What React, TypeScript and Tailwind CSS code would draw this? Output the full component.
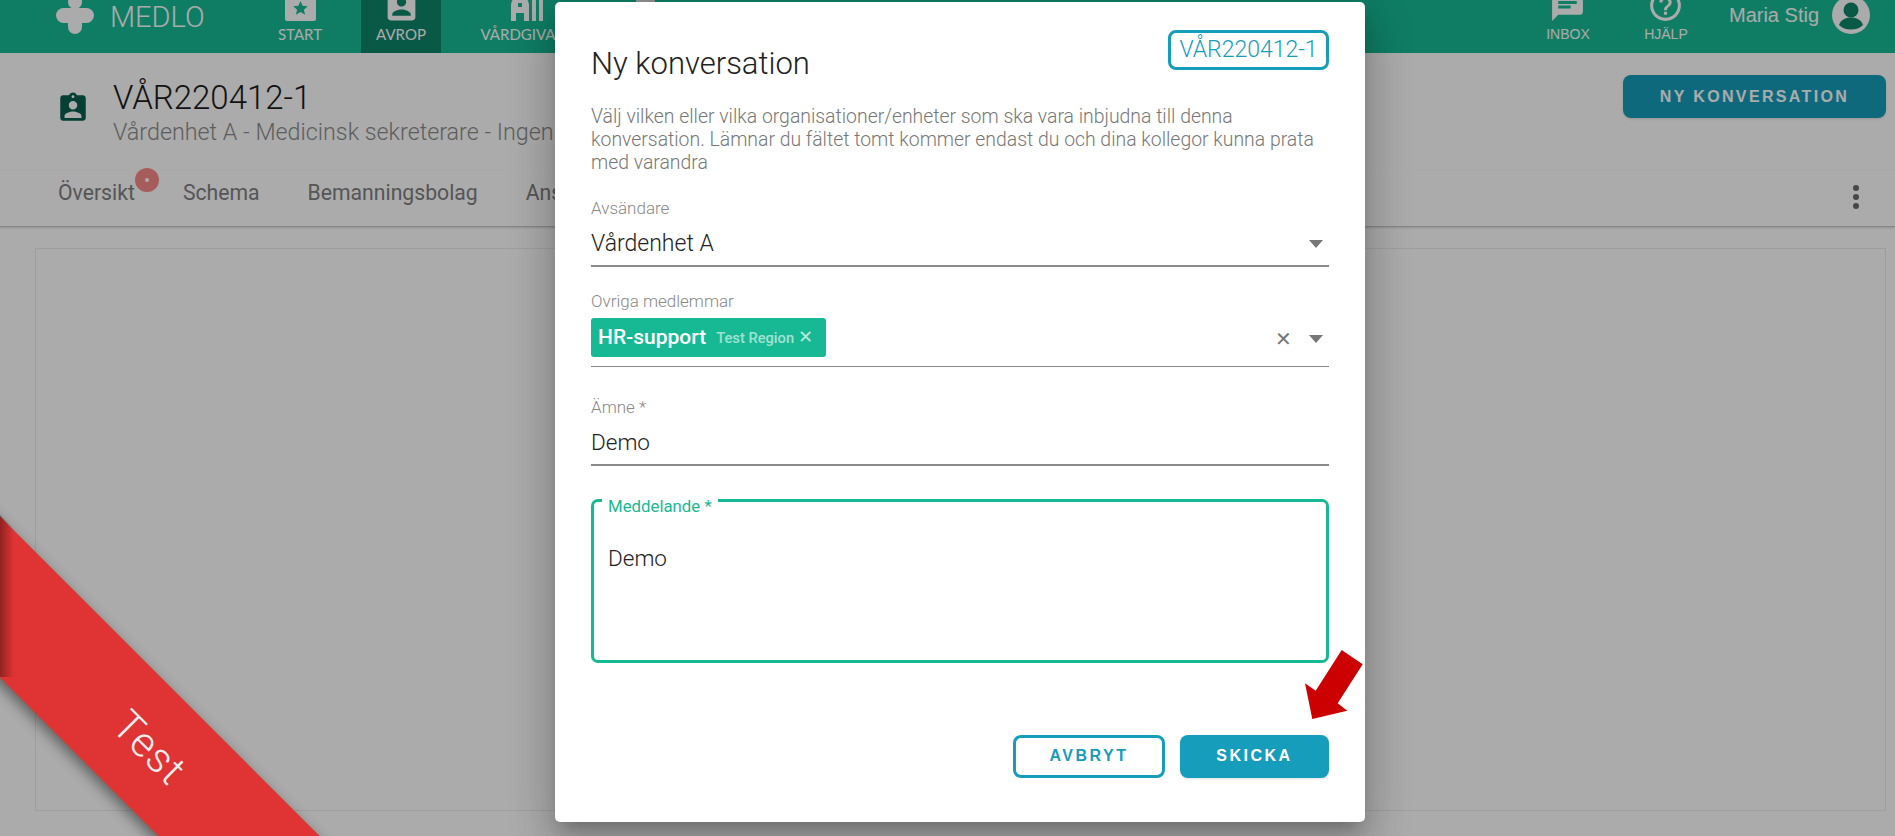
import type { ReactNode } from "react";

const ICON_BOX =
	"M3 5v14c0 1.1.89 2 2 2h14c1.1 0 2-.9 2-2V5c0-1.1-.9-2-2-2H5c-1.11 0-2 .9-2 2zm12 4c0 1.66-1.34 3-3 3s-3-1.34-3-3 1.34-3 3-3 3 1.34 3 3zm-9 8c0-2 4-3.1 6-3.1s6 1.1 6 3.1v1H6v-1z";
const ICON_CHAT =
	"M20 2H4c-1.1 0-1.99.9-1.99 2L2 22l4-4h14c1.1 0 2-.9 2-2V4c0-1.1-.9-2-2-2zM6 9h12v2H6V9zm8 5H6v-2h8v2zm4-6H6V6h12v2z";
const ICON_HELP =
	"M11 18h2v-2h-2v2zm1-16C6.48 2 2 6.48 2 12s4.48 10 10 10 10-4.48 10-10S17.52 2 12 2zm0 18c-4.41 0-8-3.59-8-8s3.59-8 8-8 8 3.59 8 8-3.59 8-8 8zm0-14c-2.21 0-4 1.79-4 4h2c0-1.1.9-2 2-2s2 .9 2 2c0 2-3 1.75-3 5h2c0-2.25 3-2.5 3-5 0-2.21-1.79-4-4-4z";
const ICON_BADGE =
	"M19 3h-4.18C14.4 1.84 13.3 1 12 1c-1.3 0-2.4.84-2.82 2H5c-1.1 0-2 .9-2 2v14c0 1.1.9 2 2 2h14c1.1 0 2-.9 2-2V5c0-1.1-.9-2-2-2zm-7 0c.55 0 1 .45 1 1s-.45 1-1 1-1-.45-1-1 .45-1 1-1zm0 4c1.66 0 3 1.34 3 3s-1.34 3-3 3-3-1.34-3-3 1.34-3 3-3zm6 12H6v-1.4c0-2 4-3.1 6-3.1s6 1.1 6 3.1V19z";

function MaterialIcon({ d, className }: { d: string; className: string }) {
	return (
		<svg viewBox="0 0 24 24" fill="currentColor" className={`shrink-0 ${className}`}>
			<path d={d} />
		</svg>
	);
}

function NavItem({
	label,
	icon,
	active,
	className,
}: {
	label: string;
	icon: ReactNode;
	active?: boolean;
	className: string;
}) {
	return (
		<div
			className={`flex h-[53px] flex-col items-center justify-end pb-[11px] text-white ${active ? "bg-[#0e856b]" : ""} ${className}`}
		>
			{icon}
			<span className="mt-[5px] shrink-0 whitespace-nowrap leading-[16px]">{label}</span>
		</div>
	);
}

function Arrow() {
	return <span className="h-0 w-0 border-x-[7.5px] border-t-[8px] border-x-transparent border-t-[#777]" />;
}

function FieldLabel({ children }: { children: ReactNode }) {
	return (
		<div className="h-5 text-[17px] font-light leading-5 text-[#888]">
			{children}
		</div>
	);
}

export default function App() {
	return (
		<div className="relative h-[836px] w-full overflow-hidden bg-white font-[Roboto,sans-serif]">
			{/* Header, scrolled a little so the icons are cut off at the top */}
			<header className="flex h-[53px] items-end overflow-hidden bg-[#17bb95]">
				<div className="relative ml-[56px] h-[53px] w-[38px] shrink-0 text-white">
					<span className="absolute left-[12px] top-[-5px] h-[14px] w-[14px] rounded-full bg-white" />
					<span className="absolute left-0 top-[8px] h-[15px] w-[38px] rounded-full bg-white" />
					<span className="absolute left-[12px] top-[10px] h-[24px] w-[14px] rounded-full bg-white" />
				</div>
				<span className="ml-[16px] w-[150px] pb-[19px] text-[29px] font-light leading-[34px] text-white">
					MEDLO
				</span>
				<NavItem
					label="START"
					className="w-[80px] font-[Lato,sans-serif] text-[15px]"
					icon={
						<svg viewBox="0 0 31 24" className="h-[24px] w-[31px] shrink-0">
							<rect width="31" height="24" rx="2" fill="#fff" />
							<path
								d="M15.5 4l2.1 4.8 5.2.5-3.9 3.4 1.2 5.1-4.6-2.7-4.6 2.7 1.2-5.1-3.9-3.4 5.2-.5z"
								fill="#17bb95"
							/>
						</svg>
					}
				/>
				<NavItem
					label="AVROP"
					active
					className="ml-[21px] w-[80px] font-[Lato,sans-serif] text-[15px]"
					icon={<MaterialIcon d={ICON_BOX} className="-mb-[4px] h-[37px] w-[37px]" />}
				/>
				<NavItem
					label="VÅRDGIVARE"
					className="ml-[31px] w-[110px] font-[Lato,sans-serif] text-[15px]"
					icon={
						<svg viewBox="0 0 32 24" fill="#fff" className="h-[24px] w-[32px] shrink-0">
							<path d="M0 24V8a9 9 0 0 1 18 0v16h-5v-8H5v8zM7 6h4v4H7zM21 0h4v24h-4zM28 0h4v24h-4z" fillRule="evenodd" />
						</svg>
					}
				/>
				<div className="ml-[54px] h-[53px] w-[19px] self-start bg-[#dcdcdc]" />

				<div className="ml-auto flex items-end">
					<NavItem
						label="INBOX"
						className="w-[70px] font-['Liberation_Sans',sans-serif] text-[14px]"
						icon={<MaterialIcon d={ICON_CHAT} className="-mb-[3px] h-[37px] w-[37px]" />}
					/>
					<NavItem
						label="HJÄLP"
						className="ml-[28px] w-[70px] font-['Liberation_Sans',sans-serif] text-[14px]"
						icon={<MaterialIcon d={ICON_HELP} className="-mb-[3px] h-[37px] w-[37px]" />}
					/>
					<div className="ml-[28px] flex h-[53px] items-start font-['Liberation_Sans',sans-serif]">
						<span className="whitespace-nowrap pt-[3px] text-[20px] leading-[24px] text-white">
							Maria Stig
						</span>
						<svg viewBox="0 0 38 38" className="ml-[13px] mr-[25px] mt-[-4px] h-[38px] w-[38px]">
							<circle cx="19" cy="19" r="19" fill="#fff" />
							<circle cx="19" cy="14" r="7.5" fill="#0e856b" />
							<path d="M7 29c2-6 8-7.5 12-7.5s10 1.5 12 7.5c-3 3-7 4.5-12 4.5S10 32 7 29z" fill="#0e856b" />
						</svg>
					</div>
				</div>
			</header>

			{/* Order title */}
			<div className="flex h-[117px] items-start justify-between pr-[9px]">
				<div className="flex items-start pt-[28px]">
					<MaterialIcon d={ICON_BADGE} className="ml-[56px] mt-[10px] h-[34px] w-[34px] text-[#095f4c]" />
					<div className="ml-[23px]">
						<div className="whitespace-nowrap text-[33px] font-light leading-[34px] text-[#1c1c1c]">
							VÅR220412-1
						</div>
						<div className="mt-[5px] whitespace-nowrap text-[23.3px] font-light leading-[24px] text-[#8d8d8d]">
							Vårdenhet A - Medicinsk sekreterare - Ingen
						</div>
					</div>
				</div>
				<button
					type="button"
					className="mt-[22px] h-[43px] w-[263px] rounded-[8px] bg-[#169dbb] font-['Liberation_Sans',sans-serif] text-[16px] font-bold tracking-[2.35px] text-white shadow-sm"
				>
					NY KONVERSATION
				</button>
			</div>

			{/* Tabs */}
			<div className="flex h-[57px] items-start justify-between border-b border-[#c8c8c8] pl-[58px] pr-[36px] shadow-[0_1px_2px_rgba(0,0,0,0.15)]">
				<div className="flex gap-[48px] pt-[12px] text-[21.2px] font-normal leading-[22px] text-[#808080]">
					<span className="relative">
						Översikt
						<span className="absolute -right-[24px] -top-[14px] flex h-[24px] w-[24px] items-center justify-center rounded-full bg-[#fa8a8a]">
							<span className="h-[4px] w-[4px] rounded-full bg-white" />
						</span>
					</span>
					<span>Schema</span>
					<span>Bemanningsbolag</span>
					<span>Ans</span>
				</div>
				<div className="flex flex-col gap-[3px] pt-[15px]">
					<span className="h-[6px] w-[6px] rounded-full bg-[#6a6a6a]" />
					<span className="h-[6px] w-[6px] rounded-full bg-[#6a6a6a]" />
					<span className="h-[6px] w-[6px] rounded-full bg-[#6a6a6a]" />
				</div>
			</div>

			<div className="ml-[35px] mr-[9px] mt-[21px] h-[563px] border border-[#ececec]" />

			{/* Dimmed backdrop */}
			<div className="absolute inset-0 bg-black/[0.33]" />

			{/* Test ribbon */}
			<div className="absolute left-[-200px] top-[690px] flex h-[114px] w-[700px] rotate-45 items-center justify-center bg-[#e03434] text-[42px] font-light tracking-[1px] text-[#eeeeee] shadow-[0_5px_14px_rgba(0,0,0,0.45)]">
				Test
			</div>
			<div className="absolute left-0 top-[515px] h-[162px] w-[14px] bg-gradient-to-r from-black/35 to-transparent [clip-path:polygon(0_0,100%_14px,100%_176px,0_100%)]" />

			{/* Dialog */}
			<div className="absolute left-[555px] top-[2px] w-[810px] rounded-[5px] bg-white px-[36px] pb-[44px] pt-[28px] shadow-[0_11px_15px_-7px_rgba(0,0,0,0.2),0_24px_38px_3px_rgba(0,0,0,0.14),0_9px_46px_8px_rgba(0,0,0,0.12)]">
				<div className="flex h-[40px] items-start justify-between">
					<h2 className="pt-[17px] text-[31px] font-light leading-[34px] text-[#222]">
						Ny konversation
					</h2>
					<div className="flex h-[40px] w-[161px] items-center justify-center rounded-[8px] border-[3px] border-[#169dbb] text-[23px] font-light text-[#169dbb]">
						VÅR220412-1
					</div>
				</div>

				<p className="mt-[35px] whitespace-nowrap text-[19.4px] font-light leading-[23px] text-[#777]">
					Välj vilken eller vilka organisationer/enheter som ska vara inbjudna till denna
					<br />
					konversation. Lämnar du fältet tomt kommer endast du och dina kollegor kunna prata
					<br />
					med varandra
				</p>

				<div className="mt-[24px]">
					<FieldLabel>Avsändare</FieldLabel>
					<div className="flex h-[49px] items-center justify-between border-b-2 border-[#8a8a8a] pr-[6px] pt-[5px] text-[23px] font-light text-[#222]">
						Vårdenhet A
						<span className="flex">
							<Arrow />
						</span>
					</div>
				</div>

				<div className="mt-[24px]">
					<FieldLabel>Ovriga medlemmar</FieldLabel>
					<div className="flex h-[56px] items-center justify-between border-b border-[#8a8a8a] pb-[9px] pr-[6px] pt-[7px]">
						<div className="flex h-[39px] w-[235px] items-center rounded-[3px] bg-[#17b994] pl-[7px] pt-[1px] text-white">
							<span className="text-[21px] font-medium">HR-support</span>
							<span className="ml-[10px] text-[14.7px] font-medium text-white/60">Test Region</span>
							<span className="ml-[4px] -mt-[3px] text-[18px] font-medium leading-none text-white/70">✕</span>
						</div>
						<div className="flex items-center gap-[17px] pt-[2px]">
							<span className="text-[20px] font-light leading-none text-[#777]">✕</span>
							<span className="flex pt-[1px]">
								<Arrow />
							</span>
						</div>
					</div>
				</div>

				<div className="mt-[30px]">
					<FieldLabel>Ämne *</FieldLabel>
					<div className="flex h-[49px] items-center border-b-2 border-[#8a8a8a] pt-[4px] text-[22.5px] font-light text-[#222]">
						Demo
					</div>
				</div>

				<div className="relative mt-[33px] h-[164px] rounded-[7px] border-[3px] border-[#17b994] pl-[14px] pt-[41px] text-[22.5px] font-light leading-[30px] text-[#222]">
					<span className="absolute -top-[6px] left-[8px] bg-white px-[6px] text-[16.8px] font-normal leading-5 text-[#17b994]">
						Meddelande *
					</span>
					Demo
				</div>

				<div className="mt-[72px] flex justify-end gap-[15px] font-['Liberation_Sans',sans-serif] text-[16px] font-bold tracking-[2.5px]">
					<button
						type="button"
						className="h-[43px] w-[152px] rounded-[8px] border-[3px] border-[#169dbb] pb-[2px] text-[#169dbb]"
					>
						AVBRYT
					</button>
					<button
						type="button"
						className="h-[43px] w-[149px] rounded-[8px] bg-[#169dbb] pb-[2px] text-white shadow-sm"
					>
						SKICKA
					</button>
				</div>
			</div>

			{/* Red annotation arrow */}
			<svg viewBox="0 0 70 80" className="absolute left-[1300px] top-[645px] h-[80px] w-[70px]">
				<polygon points="41.7,5 62.7,19.3 37.7,58.3 47.3,65.7 12.3,74 5,38.3 15.7,45.7" fill="#cc0000" />
			</svg>
		</div>
	);
}
